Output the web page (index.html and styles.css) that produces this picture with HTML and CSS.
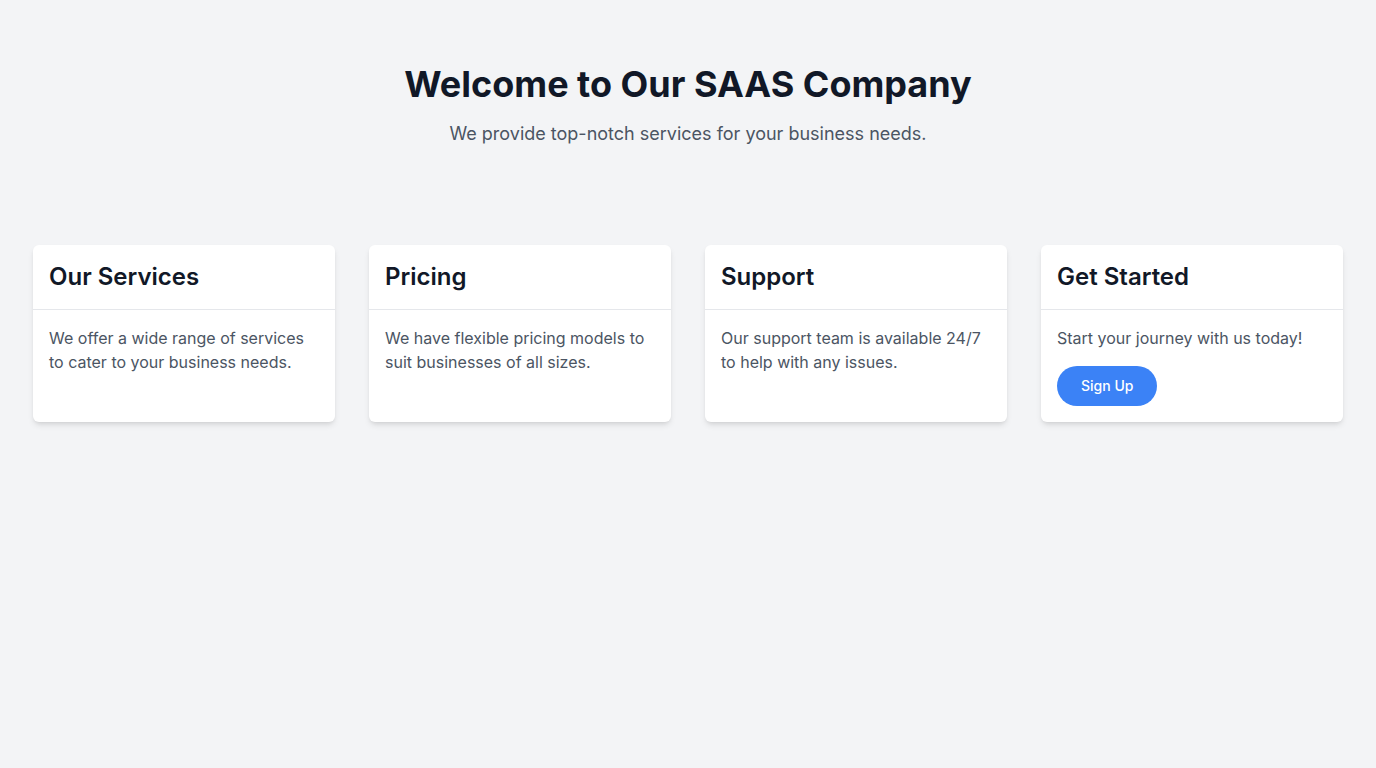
FILE: index.html
```html
<!DOCTYPE html>
<html lang="en">
<head>
<meta charset="utf-8">
<title>SAAS Company</title>
<link rel="stylesheet" href="styles.css">
</head>
<body>
<header class="hero">
  <h1 class="hero-title">Welcome to Our SAAS Company</h1>
  <p class="hero-sub">We provide top-notch services for your business needs.</p>
</header>
<main class="cards">
  <section class="card">
    <div class="card-head"><h2 class="card-title">Our Services</h2></div>
    <div class="card-body"><p class="card-text">We offer a wide range of services to cater to your business needs.</p></div>
  </section>
  <section class="card">
    <div class="card-head"><h2 class="card-title">Pricing</h2></div>
    <div class="card-body"><p class="card-text">We have flexible pricing models to suit businesses of all sizes.</p></div>
  </section>
  <section class="card">
    <div class="card-head"><h2 class="card-title">Support</h2></div>
    <div class="card-body"><p class="card-text">Our support team is available 24/7 to help with any issues.</p></div>
  </section>
  <section class="card">
    <div class="card-head"><h2 class="card-title">Get Started</h2></div>
    <div class="card-body">
      <p class="card-text">Start your journey with us today!</p>
      <button class="btn">Sign Up</button>
    </div>
  </section>
</main>
</body>
</html>
```
FILE: styles.css
```css
* { box-sizing: border-box; }
html, body { margin: 0; padding: 0; }
body {
  background: #f3f4f6;
  font-family: Inter, "Noto Sans", sans-serif;
  color: #111827;
  min-height: 768px;
}
.hero {
  text-align: center;
  padding: 64px 16px 0;
}
.hero-title {
  margin: 0;
  font-size: 36px;
  line-height: 40px;
  font-weight: 700;
  color: #111827;
}
.hero-sub {
  margin: 16px 0 0;
  font-size: 18px;
  line-height: 28px;
  color: #4b5563;
}
.cards {
  display: grid;
  grid-template-columns: repeat(4, 1fr);
  gap: 34px;
  padding: 0 33px;
  margin-top: 97px;
}
.card {
  background: #fff;
  border-radius: 6px;
  box-shadow: 0 4px 6px -1px rgba(0,0,0,0.1), 0 2px 4px -2px rgba(0,0,0,0.1);
  display: flex;
  flex-direction: column;
}
.card-head {
  padding: 16px;
  border-bottom: 1px solid #e5e7eb;
}
.card-title {
  margin: 0;
  font-size: 24px;
  line-height: 32px;
  font-weight: 600;
  color: #111827;
}
.card-body {
  padding: 16px;
}
.card-text {
  margin: 0;
  font-size: 16px;
  line-height: 24px;
  color: #4b5563;
}
.btn {
  margin-top: 16px;
  display: inline-block;
  background: #3b82f6;
  color: #fff;
  border: 0;
  border-radius: 9999px;
  padding: 10px 24px;
  font-family: inherit;
  font-size: 14px;
  line-height: 20px;
  font-weight: 500;
  cursor: pointer;
}
```
